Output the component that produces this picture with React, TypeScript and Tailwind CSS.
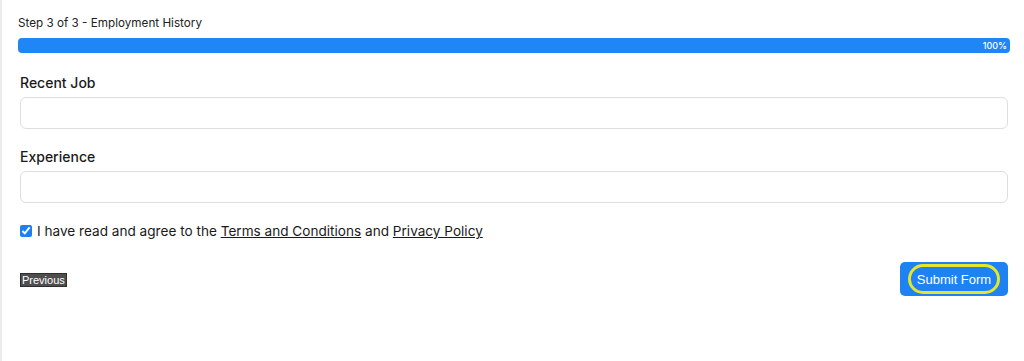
import React from "react";

export default function App() {
  return (
    <div className="w-[1024px] h-[361px] bg-white overflow-hidden flex" style={{ fontFamily: "Inter, 'Noto Sans', sans-serif" }}>
      <div className="w-[2px] bg-[#ececec] shrink-0" />
      <div className="flex-1 pl-[16px] pr-[14px] pt-[15px]">
        <div className="text-[11.7px] leading-[16px] text-[#222]">Step 3 of 3 - Employment History</div>
        <div className="mt-[7px] h-[15px] rounded-[4px] bg-[#1f86f5] flex items-center justify-end pr-[3px]">
          <span className="text-[9px] font-medium text-white leading-none">100%</span>
        </div>
        <div className="pl-[2px] pr-[2px]">
          <label className="block mt-[21px] text-[14px] leading-[18px] font-medium text-[#1a1a1a]">Recent Job</label>
          <input className="mt-[5px] block w-full h-[32px] rounded-[6px] border border-[#dedede] outline-none" />
          <label className="block mt-[19px] text-[14px] leading-[18px] font-medium text-[#1a1a1a]">Experience</label>
          <input className="mt-[5px] block w-full h-[32px] rounded-[6px] border border-[#dedede] outline-none" />
          <div className="mt-[19px] flex items-center text-[13.6px] leading-[18px] text-[#1a1a1a]">
            <input type="checkbox" defaultChecked className="m-0 w-[12px] h-[12px] accent-[#1f7ff0]" />
            <span className="ml-[5px]">
              I have read and agree to the <span className="underline">Terms and Conditions</span> and <span className="underline">Privacy Policy</span>
            </span>
          </div>
          <div className="mt-[22px] flex items-start justify-between">
            <button className="mt-[11px] h-[14px] px-[1px] bg-[#4e4e4e] border border-[#2e2e2e] text-white text-[11px] leading-[12px]" style={{ fontFamily: "'Liberation Sans', Arial, sans-serif" }}>
              Previous
            </button>
            <button className="w-[108px] h-[34px] rounded-[5px] bg-[#1f82f2] flex items-center justify-center" style={{ fontFamily: "'Liberation Sans', Arial, sans-serif" }}>
              <span className="w-[92px] h-[30px] rounded-full border-[3px] border-[#e3e62a] flex items-center justify-center text-white text-[13px] leading-none">
                Submit Form
              </span>
            </button>
          </div>
        </div>
      </div>
    </div>
  );
}
